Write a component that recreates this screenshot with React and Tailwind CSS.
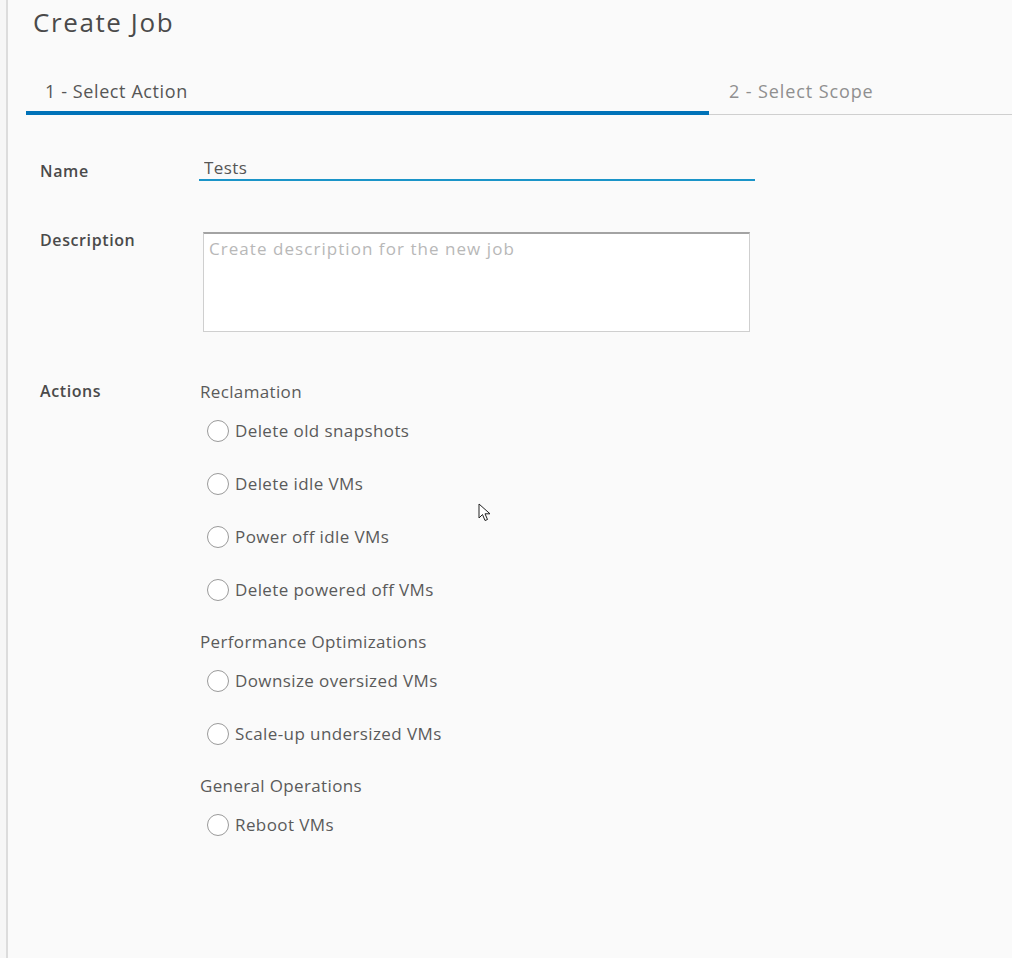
import React, { useState } from "react";

const groups = [
  {
    title: "Reclamation",
    items: ["Delete old snapshots", "Delete idle VMs", "Power off idle VMs", "Delete powered off VMs"],
  },
  {
    title: "Performance Optimizations",
    items: ["Downsize oversized VMs", "Scale-up undersized VMs"],
  },
  {
    title: "General Operations",
    items: ["Reboot VMs"],
  },
];

function Radio({ label, checked, onChange }) {
  return (
    <label className="flex items-center h-[53px] pl-[7px] cursor-pointer" onClick={onChange}>
      <span className="w-[22px] h-[22px] rounded-full border border-[#9a9a9a] bg-white flex items-center justify-center">
        {checked && <span className="w-[10px] h-[10px] rounded-full bg-[#0072a3]" />}
      </span>
      <span className="ml-[6px] text-[17px] tracking-[0.4px] text-[#5a5a5a]">{label}</span>
    </label>
  );
}

export default function App() {
  const [name, setName] = useState("Tests");
  const [selected, setSelected] = useState(null);

  return (
    <div
      className="relative min-h-[958px] bg-[#fafafa] flex"
      style={{ fontFamily: "'Open Sans', Lato, sans-serif" }}
    >
      <div className="w-[8px] bg-[#f6f6f6] border-r-2 border-[#dcdcdc]" />

      <div className="flex-1">
        {/* Header */}
        <h1 className="pl-[25px] pt-[6px] h-[40px] text-[26px] leading-[32px] tracking-[1.6px] text-[#4a4a4a]">Create Job</h1>

        {/* Steps */}
        <div className="flex ml-[18px] mt-[33px]">
          <div className="w-[683px] h-[42px] pl-[19px] pt-[3px] border-b-4 border-[#0072b8] text-[18px] leading-[30px] tracking-[0.6px] text-[#565656]">
            1 - Select Action
          </div>
          <div className="flex-1 h-[42px] pl-[20px] pt-[3px] border-b border-[#cfcfcf] text-[18px] leading-[30px] tracking-[0.9px] text-[#8f8f8f]">
            2 - Select Scope
          </div>
        </div>

        {/* Form */}
        <div className="pl-[32px] pt-[40px]">
          <div className="flex items-start h-[50px]">
            <div className="w-[159px] pt-[4px] text-[16px] leading-[24px] tracking-[0.6px] font-semibold text-[#4a4a4a]">Name</div>
            <input
              value={name}
              onChange={(e) => setName(e.target.value)}
              className="w-[556px] h-[26px] bg-transparent pl-[5px] text-[17px] tracking-[0.4px] text-[#555] border-b-2 border-[#1a94c8] outline-none"
            />
          </div>

          <div className="flex items-start mt-[27px]">
            <div className="w-[163px] text-[16px] leading-[16px] tracking-[0.6px] font-semibold text-[#4a4a4a]">Description</div>
            <textarea
              placeholder="Create description for the new job"
              className="w-[547px] h-[100px] bg-white border border-[#cfcfcf] border-t-2 border-t-[#a3a3a3] px-[5px] pt-[3px] text-[17px] leading-[23px] tracking-[1.05px] text-[#555] placeholder:text-[#b8b8b8] resize-none outline-none"
            />
          </div>

          <div className="flex items-start mt-[47px]">
            <div className="w-[160px] text-[16px] leading-[25px] tracking-[0.6px] font-semibold text-[#4a4a4a]">Actions</div>
            <div>
              {groups.map((g, i) => (
                <div key={g.title} className={i > 0 ? "mt-[13px]" : ""}>
                  <div className="h-[25px] leading-[25px] text-[17px] tracking-[0.35px] text-[#5a5a5a]">{g.title}</div>
                  {g.items.map((item) => (
                    <Radio
                      key={item}
                      label={item}
                      checked={selected === item}
                      onChange={() => setSelected(item)}
                    />
                  ))}
                </div>
              ))}
            </div>
          </div>
        </div>
      </div>

      {/* mouse pointer */}
      <svg className="absolute left-[478px] top-[503px]" width="14" height="20" viewBox="0 0 14 20">
        <path d="M1 1 L1 15 L4.5 11.5 L7 17.5 L9.5 16.5 L7 10.8 L12 10.8 Z" fill="white" stroke="#222" strokeWidth="1" />
      </svg>
    </div>
  );
}
